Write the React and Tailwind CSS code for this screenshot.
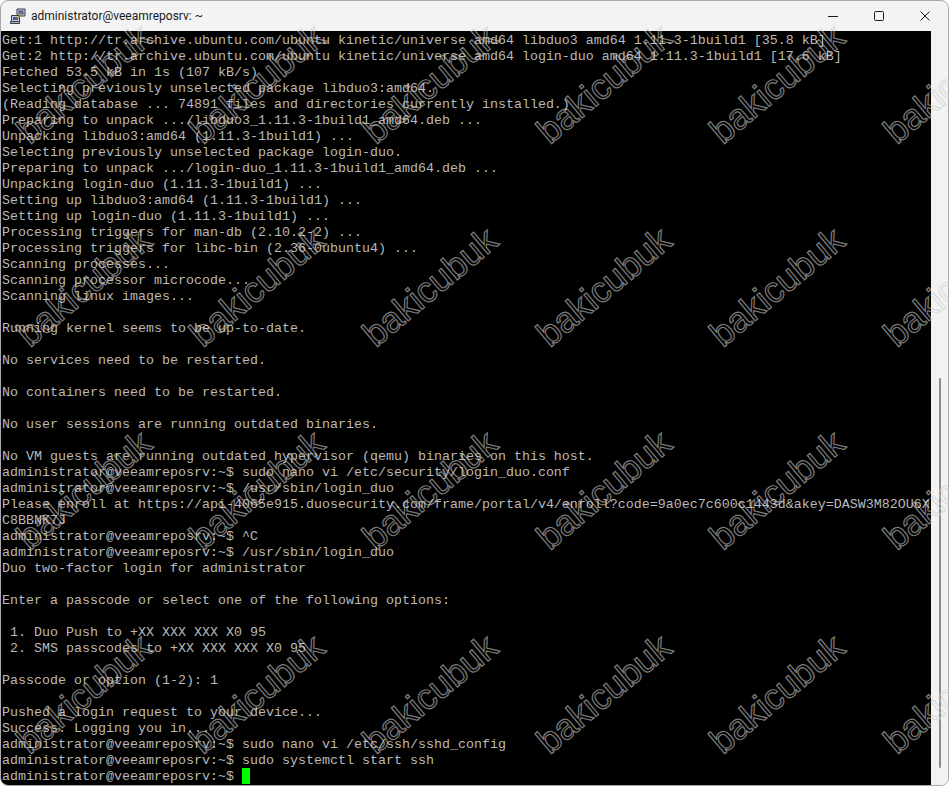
import React from 'react';

const PROMPT = 'administrator@veeamreposrv:~$';

const TERMINAL_TEXT = `Get:1 http://tr.archive.ubuntu.com/ubuntu kinetic/universe amd64 libduo3 amd64 1.11.3-1build1 [35.8 kB]
Get:2 http://tr.archive.ubuntu.com/ubuntu kinetic/universe amd64 login-duo amd64 1.11.3-1build1 [17.6 kB]
Fetched 53.5 kB in 1s (107 kB/s)
Selecting previously unselected package libduo3:amd64.
(Reading database ... 74891 files and directories currently installed.)
Preparing to unpack .../libduo3_1.11.3-1build1_amd64.deb ...
Unpacking libduo3:amd64 (1.11.3-1build1) ...
Selecting previously unselected package login-duo.
Preparing to unpack .../login-duo_1.11.3-1build1_amd64.deb ...
Unpacking login-duo (1.11.3-1build1) ...
Setting up libduo3:amd64 (1.11.3-1build1) ...
Setting up login-duo (1.11.3-1build1) ...
Processing triggers for man-db (2.10.2-2) ...
Processing triggers for libc-bin (2.36-0ubuntu4) ...
Scanning processes...
Scanning processor microcode...
Scanning linux images...

Running kernel seems to be up-to-date.

No services need to be restarted.

No containers need to be restarted.

No user sessions are running outdated binaries.

No VM guests are running outdated hypervisor (qemu) binaries on this host.
${PROMPT} sudo nano vi /etc/security/login_duo.conf
${PROMPT} /usr/sbin/login_duo
Please enroll at https://api-4065e915.duosecurity.com/frame/portal/v4/enroll?code=9a0ec7c600c1443d&akey=DASW3M82OU6X
C8BBNK7J
${PROMPT} ^C
${PROMPT} /usr/sbin/login_duo
Duo two-factor login for administrator

Enter a passcode or select one of the following options:

 1. Duo Push to +XX XXX XXX X0 95
 2. SMS passcodes to +XX XXX XXX X0 95

Passcode or option (1-2): 1

Pushed a login request to your device...
Success. Logging you in...
${PROMPT} sudo nano vi /etc/ssh/sshd_config
${PROMPT} sudo systemctl start ssh
${PROMPT} `;

const PuttyIcon = () => (
  <svg width="16" height="16" viewBox="0 0 16 16" className="shrink-0">
    <path d="M7 1h8v7H7z" fill="#c9c9d6" stroke="#3a3a4a" strokeWidth="1" />
    <path d="M8.500 2.500h5v4h-5z" fill="#3f58b5" />
    <path d="M1.500 7.500h8v6h-8z" fill="#c9c9d6" stroke="#3a3a4a" strokeWidth="1" />
    <path d="M3 9h5v3H3z" fill="#3f58b5" />
    <path d="M.5 13.500h9v2h-9z" fill="#b4b4c0" stroke="#3a3a4a" strokeWidth="1" />
    <path d="M13 3 8.500 6.500l1.500.5L5.500 11l5.500-3.300L9.700 7z" fill="#f5d516" stroke="#8a7410" strokeWidth=".5" />
  </svg>
);

const WindowButton = ({ children }) => (
  <div className="flex h-full w-[46px] items-center justify-center">
    <svg width="10" height="10" viewBox="0 0 10 10" fill="none" stroke="#1a1a1a" strokeWidth="1">
      {children}
    </svg>
  </div>
);

const Watermarks = () => (
  <div className="pointer-events-none absolute inset-0 -ml-[3px] -mt-[18px] grid grid-cols-[repeat(6,173.4px)] grid-rows-[repeat(4,203.3px)]">
    {Array.from({ length: 24 }, (_, i) => (
      <div key={i} className="flex items-center justify-center">
        <span className="-rotate-[40deg] font-['Liberation_Sans',Arial,sans-serif] text-[36px] leading-none text-transparent [-webkit-text-stroke:1.2px_rgba(205,205,205,0.6)]">
          bakicubuk
        </span>
      </div>
    ))}
  </div>
);

export default function App() {
  return (
    <div className="relative h-[786px] w-[949px] overflow-hidden bg-white">
      <div className="flex h-full w-full flex-col overflow-hidden rounded-lg border border-[#a9a9a9] bg-[#f3f3f3]">
        <div className="flex h-[30px] shrink-0 items-center pl-[9px]">
          <PuttyIcon />
          <span className="ml-[5px] font-['Roboto',sans-serif] text-[12px] text-[#1a1a1a]">
            administrator@veeamreposrv: ~
          </span>
          <div className="ml-auto flex h-full">
            <WindowButton>
              <path d="M0 5.500h10" />
            </WindowButton>
            <WindowButton>
              <rect x=".5" y=".5" width="9" height="9" rx="1" />
            </WindowButton>
            <WindowButton>
              <path d="M.5.500l9 9M9.500.500l-9 9" />
            </WindowButton>
          </div>
        </div>
        <div className="flex min-h-0 flex-1">
          <div className="relative w-[930px] overflow-hidden bg-black pl-px pt-[2px]">
            <pre className="font-['Liberation_Mono','Courier_New',monospace] text-[13.333px] leading-4 whitespace-pre text-[#b9b9b9]">
              {TERMINAL_TEXT}
              <span className="relative -top-px inline-block h-4 w-2 bg-[#00ff00] align-top" />
            </pre>
          </div>
          <div className="flex flex-1 flex-col justify-end bg-[#f2f2f2] pb-[17px] pl-2">
            <div className="h-[390px] w-[2px] rounded-full bg-[#8b8b8b]" />
          </div>
        </div>
      </div>
      <div className="absolute inset-0 overflow-hidden pointer-events-none">
        <Watermarks />
      </div>
    </div>
  );
}
